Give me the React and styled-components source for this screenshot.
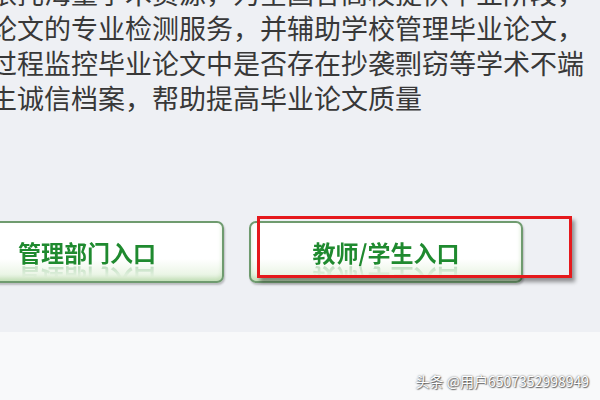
import React from "react";
import styled, { createGlobalStyle } from "styled-components";

const GlobalStyle = createGlobalStyle`
  html, body {
    margin: 0;
    padding: 0;
    background: #eef0f4;
  }
  body {
    font-family: "Noto Sans CJK SC", "Noto Sans", sans-serif;
  }
`;

const lines = [
  "依托海量学术资源，为全国各高校提供毕业阶段，",
  "论文的专业检测服务，并辅助学校管理毕业论文，",
  "过程监控毕业论文中是否存在抄袭剽窃等学术不端",
  "生诚信档案，帮助提高毕业论文质量",
];

export default function App() {
  return (
    <Page>
      <GlobalStyle />
      <Main>
        <Intro>
          {lines.map((line) => (
            <Line key={line}>{line}</Line>
          ))}
        </Intro>

        <ButtonRow>
          <EntryButton>
            <Label>管理部门入口</Label>
          </EntryButton>

          <Marked>
            <EntryButton>
              <Label>教师/学生入口</Label>
            </EntryButton>
            <RedBox />
          </Marked>
        </ButtonRow>
      </Main>

      <Footer>
        <Watermark>头条 @用户6507352998949</Watermark>
      </Footer>
    </Page>
  );
}

const Page = styled.div`
  width: 600px;
  height: 400px;
  display: flex;
  flex-direction: column;
  overflow: hidden;
`;

const Main = styled.div`
  height: 332px;
  background: #eef0f4;
  overflow: hidden;
`;

const Intro = styled.div`
  margin: -25px 0 0 -10px;
  font-size: 27px;
  line-height: 35px;
  color: #383838;
`;

const Line = styled.div`
  white-space: nowrap;
`;

const ButtonRow = styled.div`
  display: flex;
  gap: 25px;
  margin: 106px 0 0 -50px;
`;

const EntryButton = styled.div`
  width: 274px;
  height: 62px;
  box-sizing: border-box;
  display: flex;
  align-items: center;
  justify-content: center;
  border: 2px solid #6f9b6f;
  border-radius: 7px;
  background: linear-gradient(#ffffff 0%, #ffffff 62%, #e3f1dc 100%);
  box-shadow: 1px 2px 2px rgba(0, 0, 0, 0.22),
    inset 0 -3px 4px rgba(130, 185, 110, 0.35);
`;

const Label = styled.span`
  font-size: 23px;
  font-weight: bold;
  color: #1f8a2f;
  -webkit-box-reflect: below -7px
    linear-gradient(transparent 55%, rgba(255, 255, 255, 0.35));
`;

const Marked = styled.div`
  position: relative;
`;

const RedBox = styled.div`
  position: absolute;
  left: 8px;
  top: -5px;
  width: 315px;
  height: 62px;
  box-sizing: border-box;
  border: 3px solid #e5191c;
  box-shadow: 3px 4px 4px rgba(0, 0, 0, 0.4);
`;

const Footer = styled.div`
  flex: 1;
  position: relative;
  background: #f8f9fa;
`;

const Watermark = styled.div`
  position: absolute;
  right: 11px;
  bottom: 9px;
  font-size: 14px;
  color: #ffffff;
  text-shadow: 0 0 2px rgba(0, 0, 0, 0.7), 1px 1px 1px rgba(0, 0, 0, 0.5);
`;
